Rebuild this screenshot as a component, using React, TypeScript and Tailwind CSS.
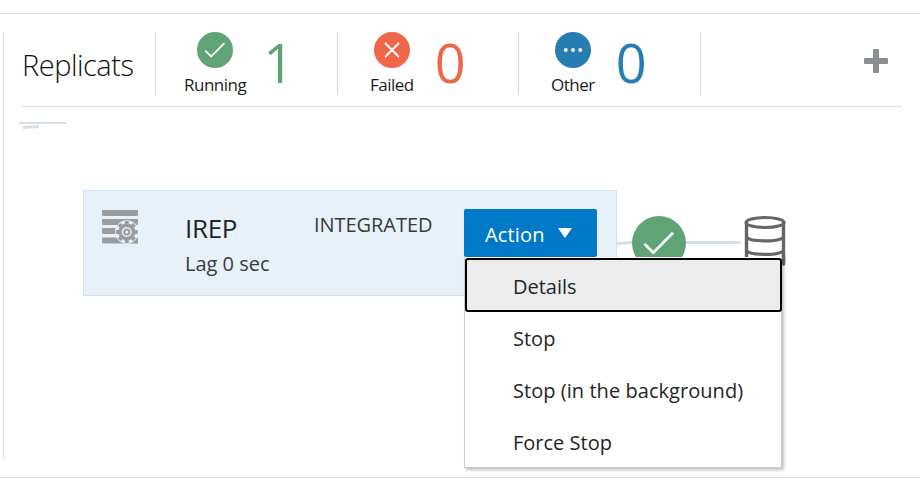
import type { ReactNode } from "react";

function Check({ className }: { className: string }) {
  return (
    <svg viewBox="0 0 36 36" className={className}>
      <circle cx="18" cy="18" r="18" fill="#60a476" />
      <path d="M8.3 18.6l5.9 5.8 13.2-13.2" fill="none" stroke="#fff" strokeWidth="1.8" />
    </svg>
  );
}

function Failed() {
  return (
    <svg viewBox="0 0 36 36" className="block size-9 shrink-0">
      <circle cx="18" cy="18" r="18" fill="#ee6749" />
      <path d="M11 11l14 14M25 11l-14 14" fill="none" stroke="#fff" strokeWidth="1.8" />
    </svg>
  );
}

function Other() {
  return (
    <svg viewBox="0 0 36 36" className="block size-9 shrink-0">
      <circle cx="18" cy="18" r="18" fill="#267db3" />
      <circle cx="10.8" cy="18" r="1.9" fill="#fff" />
      <circle cx="18" cy="18" r="1.9" fill="#fff" />
      <circle cx="25.2" cy="18" r="1.9" fill="#fff" />
    </svg>
  );
}

function Stat({ icon, label, count, pad, gap, color }: { icon: ReactNode; label: string; count: string; pad: string; gap: string; color: string }) {
  return (
    <div className={`flex h-[63px] border-l border-[#d9dcde] ${pad}`}>
      <div className="flex flex-col items-center">
        {icon}
        <span className="mt-[5px] text-[17px] leading-6 tracking-[-0.5px] text-[#1c1c1c]">{label}</span>
      </div>
      <span className={`-mt-px h-[63px] text-[54px] leading-[63px] ${gap} ${color}`}>{count}</span>
    </div>
  );
}

function ProcessIcon() {
  return (
    <svg viewBox="0 0 36 34" className="block h-[34px] w-9">
      <g fill="#999da0">
        <rect width="36" height="6" rx="1" />
        <rect y="9" width="36" height="6" rx="1" />
        <rect y="18" width="36" height="6" rx="1" />
        <rect y="27.500" width="36" height="6" rx="1" />
      </g>
      <g transform="translate(24.8 22)">
        <circle r="11.8" fill="#e7f1fa" />
        <g fill="#999da0">
          <circle r="8.5" />
          <rect x="-2" y="-11" width="4" height="22" rx="1" />
          <rect x="-2" y="-11" width="4" height="22" rx="1" transform="rotate(45)" />
          <rect x="-2" y="-11" width="4" height="22" rx="1" transform="rotate(90)" />
          <rect x="-2" y="-11" width="4" height="22" rx="1" transform="rotate(135)" />
        </g>
        <circle r="5" fill="#e7f1fa" />
        <circle r="3.6" fill="#999da0" />
        <circle r="1.5" fill="#e7f1fa" />
      </g>
      <path d="M32.500 33.500l3.500-3.500v3.500z" fill="#999da0" />
    </svg>
  );
}

function Database() {
  return (
    <svg viewBox="0 0 42 52" className="block h-[52px] w-[42px]" fill="none" stroke="#666" strokeWidth="3.2">
      <ellipse cx="21" cy="7.500" rx="19" ry="5" />
      <path d="M2.500 7v39c0 6 37 6 37 0V7" strokeWidth="3.400" />
      <path d="M2.500 22c3 5.200 34 5.200 37 0M2.500 35.500c3 5.200 34 5.200 37 0" />
      <path d="M39.500 40v9" strokeLinecap="round" strokeWidth="3.400" />
    </svg>
  );
}

const items = [
  { label: "Stop", track: "" },
  { label: "Stop (in the background)", track: "tracking-[0.05px]" },
  { label: "Force Stop", track: "" },
];

export default function App() {
  return (
    <div className="h-[484px] w-[920px] overflow-hidden bg-white pt-[13px] font-['Open_Sans','Noto_Sans',sans-serif] text-[#252525]">
      <div className="h-[465px] border-y border-[#d9dcde] pt-[18px]">
        <section className="ml-[3px] h-[427px] border-l border-[#d9dcde] pl-[17px]">
          <header className="flex h-[75px] w-[881px] border-b border-[#dfe2e4]">
            <h1 className="h-[63px] w-[134px] pl-px text-[29px] leading-[66px] font-light tracking-[-0.5px] text-[#111]">Replicats</h1>
            <div className="w-[182px]">
              <Stat icon={<Check className="block size-9 shrink-0" />} label="Running" count="1" pad="pl-7" gap="ml-[17px]" color="text-[#60a476]" />
            </div>
            <div className="w-[181px]">
              <Stat icon={<Failed />} label="Failed" count="0" pad="pl-8" gap="ml-[21px]" color="text-[#ee6749]" />
            </div>
            <div className="w-[182px]">
              <Stat icon={<Other />} label="Other" count="0" pad="pl-8" gap="ml-[21px]" color="text-[#267db3]" />
            </div>
            <div className="h-[63px] flex-1 border-l border-[#d9dcde] pt-[17px] pl-[163px]">
              <svg viewBox="0 0 24 24" className="block size-6" fill="#8a8f93">
                <rect y="9" width="24" height="6" rx="1" />
                <rect x="9" width="6" height="24" rx="1" />
              </svg>
            </div>
          </header>

          <div className="relative h-[352px]">
            <svg viewBox="0 0 47 8" className="absolute top-[15px] -left-0.5 h-2 w-[47px]" fill="#d6dfe6">
              <rect width="47" height="2" />
              <path d="M4 4l16-1v3l-16 1z" />
            </svg>
            <svg viewBox="0 0 125 6" className="absolute top-[132px] left-[596px] h-1.5 w-[125px]" fill="none" stroke="#d6dfe6" strokeWidth="3">
              <path d="M0 4.500L16 3.500M60 3.500H123.500" />
            </svg>
            <Check className="absolute top-[109px] left-[611px] size-[54px]" />
            <div className="absolute top-[108px] left-[723px]"><Database /></div>

            <div className="absolute top-[83px] left-[62px] flex h-[106px] w-[534px] border border-[#cfe5f7] bg-[#e7f1fa]">
              <div className="w-[101px] pt-[19px] pl-[18px]"><ProcessIcon /></div>
              <div className="w-[129px] pt-[19px]">
                <div className="text-[26px] leading-9 tracking-[-0.3px]">IREP</div>
                <div className="pt-px text-[20px] leading-[34px] text-[#3a3a3a]">Lag 0 sec</div>
              </div>
              <div className="w-[150px] pt-5 text-[20px] leading-7 tracking-[-0.05px] text-[#3a3a3a]">INTEGRATED</div>
              <button className="mt-[18px] flex h-12 w-[133px] items-center rounded-xs bg-[#0079c9] pt-[3px] pl-[21px] text-[20px] tracking-[0.15px] text-white">
                <span>Action</span>
                <svg viewBox="0 0 14 10" className="-mt-[3px] ml-[13px] h-2.5 w-3.5"><path d="M0 0h14L7 10z" fill="#fff" /></svg>
              </button>
            </div>

            <div className="absolute top-[150px] left-[443px] h-[211px] w-[318px] border border-[#c9cbcd] border-t-white bg-white text-[20px] text-[#252525] shadow-[2px_2px_3px_rgba(0,0,0,0.25)]">
              <div className="flex h-[54px] w-[317px] items-center rounded-[3px] border-2 border-black bg-[#ececec] pt-[3px] pl-[46px]">Details</div>
              {items.map((item) => (
                <div key={item.label} className={`flex h-[52px] items-center pt-[2px] pl-[48px] ${item.track}`}>{item.label}</div>
              ))}
            </div>
          </div>
        </section>
      </div>
    </div>
  );
}
